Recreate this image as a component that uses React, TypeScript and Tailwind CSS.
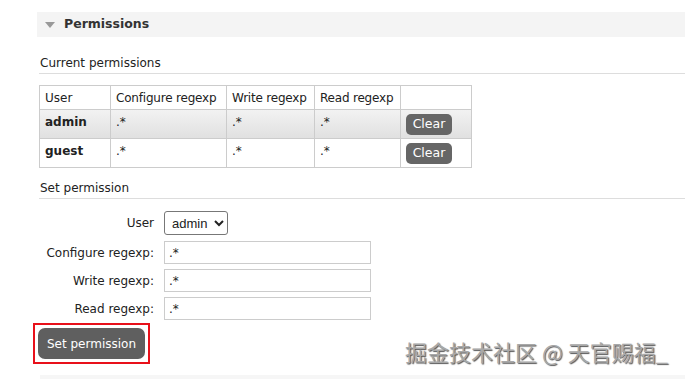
import React from "react";

const rows = [
  { user: "admin", configure: ".*", write: ".*", read: ".*", alt: true },
  { user: "guest", configure: ".*", write: ".*", read: ".*", alt: false },
];

const fields = [
  { label: "Configure regexp:", value: ".*" },
  { label: "Write regexp:", value: ".*" },
  { label: "Read regexp:", value: ".*" },
];

export default function App() {
  return (
    <div className="relative h-[379px] w-[685px] overflow-hidden bg-white text-[12px] text-[#222] [font-family:'DejaVu_Sans',Verdana,sans-serif]">
      <div className="ml-[37px] mt-[12px] flex h-[25px] items-center bg-[#f4f4f4] pl-[8px]">
        <span className="mr-[9px] h-0 w-0 border-x-[5px] border-t-[6px] border-x-transparent border-t-[#999]" />
        <h2 className="text-[12.5px] font-bold text-[#333]">Permissions</h2>
      </div>

      <div className="ml-[39px]">
        <div className="mt-[17px] border-b border-[#ddd] pb-px pl-px text-[12px]">
          Current permissions
        </div>

        <table className="mt-[11px] w-[432px] table-fixed border-collapse border border-[#ccc] text-[12px] whitespace-nowrap">
          <colgroup>
            <col className="w-[71px]" />
            <col className="w-[116px]" />
            <col className="w-[88px]" />
            <col className="w-[86px]" />
            <col className="w-[71px]" />
          </colgroup>
          <thead>
            <tr className="h-[24px]">
              <th className="border border-[#ccc] px-[5px] text-left font-normal">User</th>
              <th className="border border-[#ccc] px-[5px] text-left font-normal tracking-[-0.2px]">Configure regexp</th>
              <th className="border border-[#ccc] px-[5px] text-left font-normal tracking-[-0.2px]">Write regexp</th>
              <th className="border border-[#ccc] px-[5px] text-left font-normal tracking-[-0.2px]">Read regexp</th>
              <th className="border border-[#ccc]" />
            </tr>
          </thead>
          <tbody>
            {rows.map((row) => (
              <tr
                key={row.user}
                className={
                  row.alt
                    ? "h-[29px] bg-gradient-to-b from-[#f2f2f2] to-[#e0e0e0]"
                    : "h-[29px] bg-white"
                }
              >
                <td className="border border-[#ccc] px-[5px] pt-[3px] align-top font-bold">{row.user}</td>
                <td className="border border-[#ccc] px-[5px] pt-[3px] align-top">{row.configure}</td>
                <td className="border border-[#ccc] px-[5px] pt-[3px] align-top">{row.write}</td>
                <td className="border border-[#ccc] px-[5px] pt-[3px] align-top">{row.read}</td>
                <td className="border border-[#ccc] px-[5px] align-middle">
                  <button
                    type="button"
                    className="flex h-[21px] w-[46px] items-center justify-center rounded-[5px] bg-[#666] text-[12.5px] text-white"
                  >
                    Clear
                  </button>
                </td>
              </tr>
            ))}
          </tbody>
        </table>

        <div className="mt-[11px] border-b border-[#ddd] pb-px pl-px text-[12px]">
          Set permission
        </div>

        <div className="mt-[12px] flex items-center">
          <label className="w-[115px] text-right">User</label>
          <select
            defaultValue="admin"
            className="ml-[10px] h-[24px] w-[64px] rounded-[3px] border border-[#777] bg-white pl-[3px] pr-0 text-[13px] [font-family:'Liberation_Sans',Arial,sans-serif]"
          >
            <option value="admin">admin</option>
            <option value="guest">guest</option>
          </select>
        </div>

        <div className="mt-[6px] flex flex-col gap-[5px]">
          {fields.map((field) => (
            <div key={field.label} className="flex items-center">
              <label className="w-[115px] text-right">{field.label}</label>
              <input
                type="text"
                defaultValue={field.value}
                className="ml-[10px] h-[23px] w-[207px] border border-[#ccc] bg-white px-[4px] text-[12px] outline-none"
              />
            </div>
          ))}
        </div>

        <div className="mt-[3px] -ml-[6px] inline-block border-2 border-[#e8101a] p-[3px]">
          <button
            type="button"
            className="flex h-[31px] w-[107px] items-center justify-center rounded-[7px] bg-[#5f5f5f] text-[12px] text-white"
          >
            Set permission
          </button>
        </div>
      </div>

      <div className="ml-[40px] mt-[11px] h-[10px] bg-[#f6f6f6]" />

      <div className="pointer-events-none absolute left-[405px] top-[335px] text-[22px] text-[#a8a8a8] [font-family:'Noto_Sans_CJK_SC',sans-serif] [text-shadow:1px_1px_1px_#555]">
        掘金技术社区 @ 天官赐福_
      </div>
    </div>
  );
}
